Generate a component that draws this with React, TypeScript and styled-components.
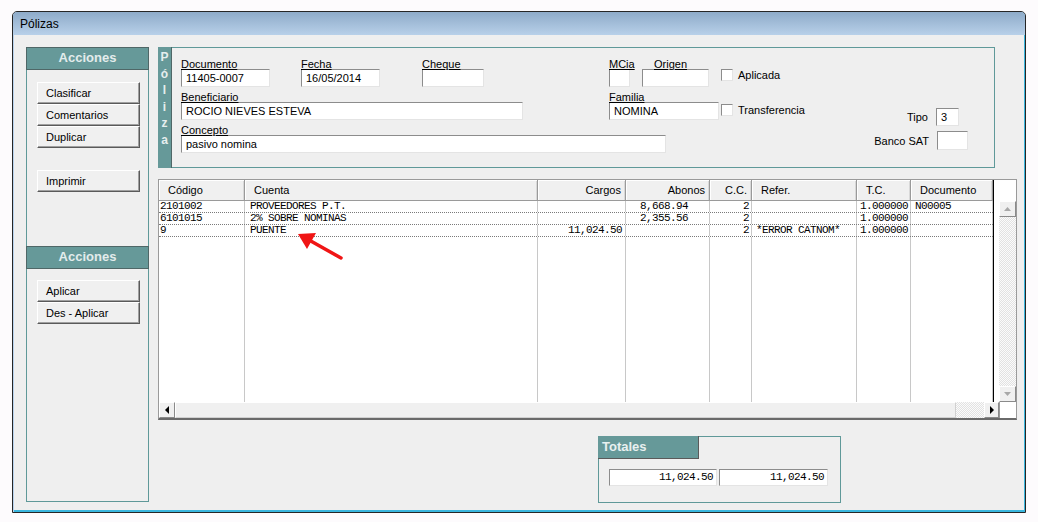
import React from 'react';
import styled, { createGlobalStyle } from 'styled-components';

const GlobalStyle = createGlobalStyle`
  html, body {
    margin: 0;
    padding: 0;
    background: #fdfbfd;
  }
  body {
    font-family: "Liberation Sans", Arial, sans-serif;
    font-size: 11px;
    color: #000;
  }
`;

const TEAL = '#669999';
const TEAL_LINE = '#5f9999';
const MONO = '"Liberation Mono", "DejaVu Sans Mono", monospace';

interface Column {
  label: string;
  width: number;
  align: 'left' | 'right';
  pad: number;
}

const columns: Column[] = [
  { label: 'Código', width: 86, align: 'left', pad: 1 },
  { label: 'Cuenta', width: 293, align: 'left', pad: 5 },
  { label: 'Cargos', width: 88, align: 'right', pad: 3 },
  { label: 'Abonos', width: 84, align: 'right', pad: 21 },
  { label: 'C.C.', width: 42, align: 'right', pad: 2 },
  { label: 'Refer.', width: 105, align: 'left', pad: 4 },
  { label: 'T.C.', width: 54, align: 'left', pad: 3 },
  { label: 'Documento', width: 82, align: 'left', pad: 4 },
];

const rows: string[][] = [
  ['2101002', 'PROVEEDORES P.T.', '', '8,668.94', '2', '', '1.000000', 'N00005'],
  ['6101015', '2% SOBRE NOMINAS', '', '2,355.56', '2', '', '1.000000', ''],
  ['9', 'PUENTE', '11,024.50', '', '2', '*ERROR CATNOM*', '1.000000', ''],
];

const Window = styled.div`
  position: relative;
  margin: 11px 0 0 12px;
  width: 1014px;
  height: 502px;
  box-sizing: border-box;
  border: 1px solid #262626;
  border-radius: 5px 5px 0 0;
  background: #efefef;
  display: flex;
  flex-direction: column;
  box-shadow: inset 1px 0 0 #b9d3ee, inset -1px 0 0 #3ab6de, inset 0 -2px 0 #3ab6de;
`;

const TitleBar = styled.div`
  height: 23px;
  flex: none;
  display: flex;
  align-items: center;
  padding-left: 7px;
  border-radius: 4px 4px 0 0;
  background: linear-gradient(#8eabc9, #b8d0e9);
  font-size: 12px;
`;

const Body = styled.div`
  flex: 1;
  display: flex;
  padding: 12px 0 0 13px;
`;

const SidePanel = styled.div`
  width: 123px;
  height: 455px;
  box-sizing: border-box;
  border: 1px solid ${TEAL_LINE};
  display: flex;
  flex-direction: column;
`;

const PanelHeader = styled.div<{ $mt?: number }>`
  height: 23px;
  margin: ${(p) => p.$mt ?? -1}px -1px 0 -1px;
  box-sizing: border-box;
  background: ${TEAL};
  border: 1px solid #4f6767;
  color: #e3ecec;
  font-weight: bold;
  font-size: 13px;
  line-height: 20px;
  text-align: center;
`;

const ActionButton = styled.button<{ $mt?: number }>`
  width: 103px;
  height: 22px;
  margin: ${(p) => p.$mt ?? 0}px 0 0 10px;
  padding: 0 0 0 8px;
  box-sizing: border-box;
  text-align: left;
  font-family: "Liberation Sans", Arial, sans-serif;
  font-size: 11px;
  color: #000;
  background: #f0f0f0;
  border: 1px solid;
  border-color: #fff #5a5a5a #5a5a5a #fff;
  box-shadow: inset -1px -1px 0 #a0a0a0;
`;

const RightColumn = styled.div`
  margin-left: 9px;
  width: 859px;
  display: flex;
  flex-direction: column;
`;

const PolizaPanel = styled.div`
  width: 837px;
  height: 121px;
  box-sizing: border-box;
  border: 1px solid ${TEAL_LINE};
  display: flex;
`;

const Strip = styled.div`
  width: 14px;
  margin: -1px 0 -1px -1px;
  box-sizing: border-box;
  background: ${TEAL};
  border-right: 1px solid #4f6767;
  display: flex;
  flex-direction: column;
  align-items: center;
  padding-top: 2px;
  color: #e6eeee;
  font-weight: bold;
  font-size: 12px;
  line-height: 16.5px;
`;

const PolizaContent = styled.div`
  flex: 1;
  display: flex;
  padding: 9px 0 0 9px;
`;

const MainFields = styled.div`
  display: flex;
  flex-direction: column;
  gap: 3px;
`;

const FieldRow = styled.div`
  display: flex;
  align-items: flex-start;
`;

const Field = styled.div<{ $ml?: number; $w: number }>`
  display: flex;
  flex-direction: column;
  width: ${(p) => p.$w}px;
  flex: none;
  margin-left: ${(p) => p.$ml ?? 0}px;
`;

const Label = styled.span<{ $indent?: number }>`
  position: relative;
  z-index: 1;
  height: 12px;
  line-height: 14px;
  padding-left: ${(p) => p.$indent ?? 0}px;
  text-decoration: underline;
  white-space: nowrap;
`;

const TextBox = styled.div<{ $w: number; $h?: number; $mono?: boolean; $right?: boolean }>`
  width: ${(p) => p.$w}px;
  height: ${(p) => p.$h ?? 18}px;
  box-sizing: border-box;
  background: #fff;
  border: 1px solid;
  border-color: #8c8c8c #e4e4e4 #e4e4e4 #8c8c8c;
  padding: ${(p) => (p.$right ? '0 3px 0 0' : '0 0 0 4px')};
  font-family: ${(p) => (p.$mono ? MONO : '"Liberation Sans", Arial, sans-serif')};
  font-size: 11px;
  letter-spacing: ${(p) => (p.$mono ? '-0.6px' : '0')};
  line-height: ${(p) => (p.$h ?? 18) - 2}px;
  text-align: ${(p) => (p.$right ? 'right' : 'left')};
  white-space: nowrap;
  overflow: hidden;
`;

const CheckItem = styled.label<{ $ml?: number; $mt?: number }>`
  display: flex;
  align-items: center;
  margin: ${(p) => p.$mt ?? 12}px 0 0 ${(p) => p.$ml ?? 0}px;
  height: 12px;
  gap: 5px;
  white-space: nowrap;
`;

const CheckBox = styled.span`
  width: 12px;
  height: 12px;
  box-sizing: border-box;
  background: #fff;
  border: 1px solid;
  border-color: #8c8c8c #e4e4e4 #e4e4e4 #8c8c8c;
`;

const SideFields = styled.div`
  margin-left: auto;
  padding: 51px 26px 0 0;
  display: flex;
  flex-direction: column;
  align-items: flex-end;
  gap: 5px;
`;

const InlineField = styled.div<{ $mr?: number }>`
  display: flex;
  align-items: center;
  gap: 8px;
  margin-right: ${(p) => p.$mr ?? 0}px;
`;

const Grid = styled.div`
  margin-top: 11px;
  width: 859px;
  height: 241px;
  box-sizing: border-box;
  border: 1px solid #9a9a9a;
  border-bottom: 2px solid #6a6a6a;
  background: #fff;
  display: flex;
  flex-direction: column;
`;

const GridTop = styled.div`
  flex: 1;
  display: flex;
  min-height: 0;
`;

const Table = styled.div`
  width: 834px;
  display: flex;
  flex-direction: column;
  border-right: 1px solid #000;
`;

const HeaderRow = styled.div`
  display: flex;
  height: 21px;
  flex: none;
`;

const HeaderCell = styled.div<{ $w: number; $align: 'left' | 'right' }>`
  width: ${(p) => p.$w}px;
  box-sizing: border-box;
  background: #f0f0f0;
  border-right: 1px solid #9a9a9a;
  border-bottom: 1px solid #9a9a9a;
  box-shadow: inset 1px 1px 0 #fff, inset -1px 0 0 #d8d8d8;
  line-height: 20px;
  padding: ${(p) => (p.$align === 'right' ? '0 4px 0 0' : '0 0 0 9px')};
  text-align: ${(p) => p.$align};
  white-space: nowrap;
  overflow: hidden;
`;

const DataRow = styled.div<{ $fill?: boolean }>`
  display: flex;
  height: ${(p) => (p.$fill ? 'auto' : '12px')};
  flex: ${(p) => (p.$fill ? 1 : 'none')};
  box-sizing: border-box;
  border-bottom: ${(p) => (p.$fill ? 'none' : '1px dotted #7a7a7a')};
`;

const DataCell = styled.div<{ $w: number; $align: 'left' | 'right'; $pad: number }>`
  width: ${(p) => p.$w}px;
  box-sizing: border-box;
  border-right: 1px solid #c8c8c8;
  font-family: ${MONO};
  font-size: 11px;
  letter-spacing: -0.6px;
  line-height: 11px;
  text-align: ${(p) => p.$align};
  padding: ${(p) => (p.$align === 'right' ? `0 ${p.$pad}px 0 0` : `0 0 0 ${p.$pad}px`)};
  white-space: nowrap;
  overflow: hidden;
`;

const VScroll = styled.div`
  margin: 21px 0 0 5px;
  width: 17px;
  display: flex;
  flex-direction: column;
`;

const Track = styled.div<{ $w?: number }>`
  flex: ${(p) => (p.$w ? 'none' : 1)};
  width: ${(p) => (p.$w ? `${p.$w}px` : 'auto')};
  background: repeating-conic-gradient(#e2e2e2 0 25%, #fbfbfb 0 50%) 0 0 / 2px 2px;
`;

const ScrollButton = styled.div<{ $w?: number }>`
  width: ${(p) => p.$w ?? 16}px;
  height: 16px;
  flex: none;
  box-sizing: border-box;
  background: #f0f0f0;
  border: 1px solid;
  border-color: #fff #8a8a8a #8a8a8a #fff;
  display: flex;
  align-items: center;
  justify-content: center;
`;

const HScroll = styled.div`
  height: 16px;
  flex: none;
  display: flex;
`;

const Thumb = styled.div`
  flex: 1;
  box-sizing: border-box;
  background: #f0f0f0;
  border: 1px solid;
  border-color: #fff #d0d0d0 #d0d0d0 #fff;
`;

const Corner = styled.div`
  width: 17px;
  box-sizing: border-box;
  background: #fff;
  border-left: 1px solid #9a9a9a;
`;

const TotalsPanel = styled.div`
  margin: 16px 0 0 440px;
  width: 243px;
  height: 67px;
  box-sizing: border-box;
  border: 1px solid ${TEAL_LINE};
`;

const TotalsHeader = styled.div`
  width: 101px;
  height: 23px;
  margin: -1px 0 0 -1px;
  box-sizing: border-box;
  background: ${TEAL};
  border-right: 1px solid #5a5a5a;
  border-bottom: 1px solid #5a5a5a;
  color: #e8f0f0;
  font-weight: bold;
  font-size: 13px;
  line-height: 22px;
  padding-left: 4px;
`;

const TotalsRow = styled.div`
  display: flex;
  gap: 2px;
  padding: 10px 0 0 10px;
`;

const Annotation = styled.svg`
  position: absolute;
  left: 267px;
  top: 212px;
  overflow: visible;
`;

const Arrow = ({ dir, color }: { dir: 'up' | 'down' | 'left' | 'right'; color: string }) => {
  const pts: Record<string, string> = {
    up: '0,4 3.5,0 7,4',
    down: '0,0 3.5,4 7,0',
    left: '4,0 0,4 4,8',
    right: '0,0 4,4 0,8',
  };
  const vertical = dir === 'up' || dir === 'down';
  return (
    <svg width={vertical ? 7 : 4} height={vertical ? 4 : 8} viewBox={vertical ? '0 0 7 4' : '0 0 4 8'}>
      <polygon points={pts[dir]} fill={color} />
    </svg>
  );
};

export default function App() {
  return (
    <>
      <GlobalStyle />
      <Window>
        <TitleBar>Pólizas</TitleBar>
        <Body>
          <SidePanel>
            <PanelHeader>Acciones</PanelHeader>
            <ActionButton $mt={12}>Clasificar</ActionButton>
            <ActionButton>Comentarios</ActionButton>
            <ActionButton>Duplicar</ActionButton>
            <ActionButton $mt={22}>Imprimir</ActionButton>
            <PanelHeader $mt={54}>Acciones</PanelHeader>
            <ActionButton $mt={11}>Aplicar</ActionButton>
            <ActionButton>Des - Aplicar</ActionButton>
          </SidePanel>

          <RightColumn>
            <PolizaPanel>
              <Strip>
                {['P', 'ó', 'l', 'i', 'z', 'a'].map((c, i) => (
                  <span key={i}>{c}</span>
                ))}
              </Strip>
              <PolizaContent>
                <MainFields>
                  <FieldRow>
                    <Field $w={89}>
                      <Label>Documento</Label>
                      <TextBox $w={89}>11405-0007</TextBox>
                    </Field>
                    <Field $w={79} $ml={31}>
                      <Label>Fecha</Label>
                      <TextBox $w={79}>16/05/2014</TextBox>
                    </Field>
                    <Field $w={62} $ml={42}>
                      <Label>Cheque</Label>
                      <TextBox $w={62} />
                    </Field>
                    <Field $w={21} $ml={125}>
                      <Label>MCia</Label>
                      <TextBox $w={21} />
                    </Field>
                    <Field $w={67} $ml={12}>
                      <Label $indent={12}>Origen</Label>
                      <TextBox $w={67} />
                    </Field>
                    <CheckItem $ml={12} $mt={12}>
                      <CheckBox />
                      Aplicada
                    </CheckItem>
                  </FieldRow>
                  <FieldRow>
                    <Field $w={342}>
                      <Label>Beneficiario</Label>
                      <TextBox $w={342}>ROCIO NIEVES ESTEVA</TextBox>
                    </Field>
                    <Field $w={110} $ml={86}>
                      <Label>Familia</Label>
                      <TextBox $w={110}>NOMINA</TextBox>
                    </Field>
                    <CheckItem $ml={2} $mt={14}>
                      <CheckBox />
                      Transferencia
                    </CheckItem>
                  </FieldRow>
                  <FieldRow>
                    <Field $w={485}>
                      <Label>Concepto</Label>
                      <TextBox $w={485}>pasivo nomina</TextBox>
                    </Field>
                  </FieldRow>
                </MainFields>
                <SideFields>
                  <InlineField $mr={9}>
                    <span>Tipo</span>
                    <TextBox $w={23}>3</TextBox>
                  </InlineField>
                  <InlineField>
                    <span>Banco SAT</span>
                    <TextBox $w={31} $h={19} />
                  </InlineField>
                </SideFields>
              </PolizaContent>
            </PolizaPanel>

            <Grid>
              <GridTop>
                <Table>
                  <HeaderRow>
                    {columns.map((c) => (
                      <HeaderCell key={c.label} $w={c.width} $align={c.align}>
                        {c.label}
                      </HeaderCell>
                    ))}
                  </HeaderRow>
                  {rows.map((r, ri) => (
                    <DataRow key={ri}>
                      {columns.map((c, ci) => (
                        <DataCell key={c.label} $w={c.width} $align={c.align} $pad={c.pad}>
                          {r[ci]}
                        </DataCell>
                      ))}
                    </DataRow>
                  ))}
                  <DataRow $fill>
                    {columns.map((c) => (
                      <DataCell key={c.label} $w={c.width} $align={c.align} $pad={c.pad} />
                    ))}
                  </DataRow>
                </Table>
                <VScroll>
                  <ScrollButton $w={17}>
                    <Arrow dir="up" color="#a8a8a8" />
                  </ScrollButton>
                  <Track />
                  <ScrollButton $w={17}>
                    <Arrow dir="down" color="#a8a8a8" />
                  </ScrollButton>
                </VScroll>
              </GridTop>
              <HScroll>
                <ScrollButton>
                  <Arrow dir="left" color="#000" />
                </ScrollButton>
                <Thumb />
                <Track $w={28} />
                <ScrollButton $w={15}>
                  <Arrow dir="right" color="#000" />
                </ScrollButton>
                <Corner />
              </HScroll>
            </Grid>

            <TotalsPanel>
              <TotalsHeader>Totales</TotalsHeader>
              <TotalsRow>
                <TextBox $w={108} $h={17} $mono $right>11,024.50</TextBox>
                <TextBox $w={109} $h={17} $mono $right>11,024.50</TextBox>
              </TotalsRow>
            </TotalsPanel>
          </RightColumn>
        </Body>

        <Annotation width="70" height="50" viewBox="0 0 70 50">
          <line x1="61" y1="34" x2="29" y2="16" stroke="#f01515" strokeWidth="3.5" strokeLinecap="round" />
          <polygon points="18,10 36,9 27,25" fill="#f01515" />
        </Annotation>
      </Window>
    </>
  );
}
